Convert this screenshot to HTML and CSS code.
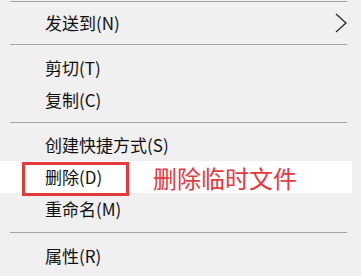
FILE: index.html
```html
<!DOCTYPE html>
<html lang="zh-CN">
<head>
<meta charset="utf-8">
<title>右键菜单</title>
<link rel="stylesheet" href="styles.css">
</head>
<body>
<div class="menu">
  <div class="sep sep-top"></div>
  <div class="item has-sub">
    <span class="label">发送到(N)</span>
    <svg class="chevron" width="14" height="20" viewBox="0 0 14 20"><polyline points="2,1 12,10 2,19" fill="none" stroke="#2b2b2b" stroke-width="1.3"/></svg>
  </div>
  <div class="sep sep-a"></div>
  <div class="item"><span class="label">剪切(T)</span></div>
  <div class="item"><span class="label">复制(C)</span></div>
  <div class="sep sep-b"></div>
  <div class="item"><span class="label">创建快捷方式(S)</span></div>
  <div class="item active">
    <span class="label">删除(D)</span>
    <div class="mark"></div>
    <span class="note">删除临时文件</span>
  </div>
  <div class="item"><span class="label">重命名(M)</span></div>
  <div class="sep sep-c"></div>
  <div class="item"><span class="label">属性(R)</span></div>
</div>
</body>
</html>
```

FILE: styles.css
```css
html, body {
  margin: 0;
  padding: 0;
  background: #f0f0f0;
}
body {
  width: 361px;
  height: 276px;
  overflow: hidden;
  font-family: "Noto Sans CJK SC", "Noto Sans", sans-serif;
  color: #111;
}
.menu {
  display: flex;
  flex-direction: column;
}
.sep {
  height: 1px;
  background: #a3a3a3;
  margin-left: 10px;
  margin-right: 14px;
}
.sep-top { margin-top: 1px; margin-bottom: 5px; }
.sep-a { margin-top: 5px; margin-bottom: 7px; }
.sep-b { margin-top: 6px; margin-bottom: 6px; }
.sep-c { margin-top: 7px; margin-bottom: 7px; }
.item {
  position: relative;
  height: 32px;
  display: flex;
  align-items: center;
  padding-left: 45px;
  padding-right: 13px;
  font-size: 17px;
  line-height: 32px;
}
.has-sub .chevron {
  margin-left: auto;
}
.active {
  background: #ffffff;
  margin-right: 9px;
}
.mark {
  position: absolute;
  left: 22px;
  top: 1px;
  width: 107px;
  height: 34px;
  box-sizing: border-box;
  border: 3px solid #e23b3b;
}
.note {
  position: absolute;
  left: 153px;
  top: 0;
  font-size: 24px;
  line-height: 34px;
  color: #e8383d;
}
```
